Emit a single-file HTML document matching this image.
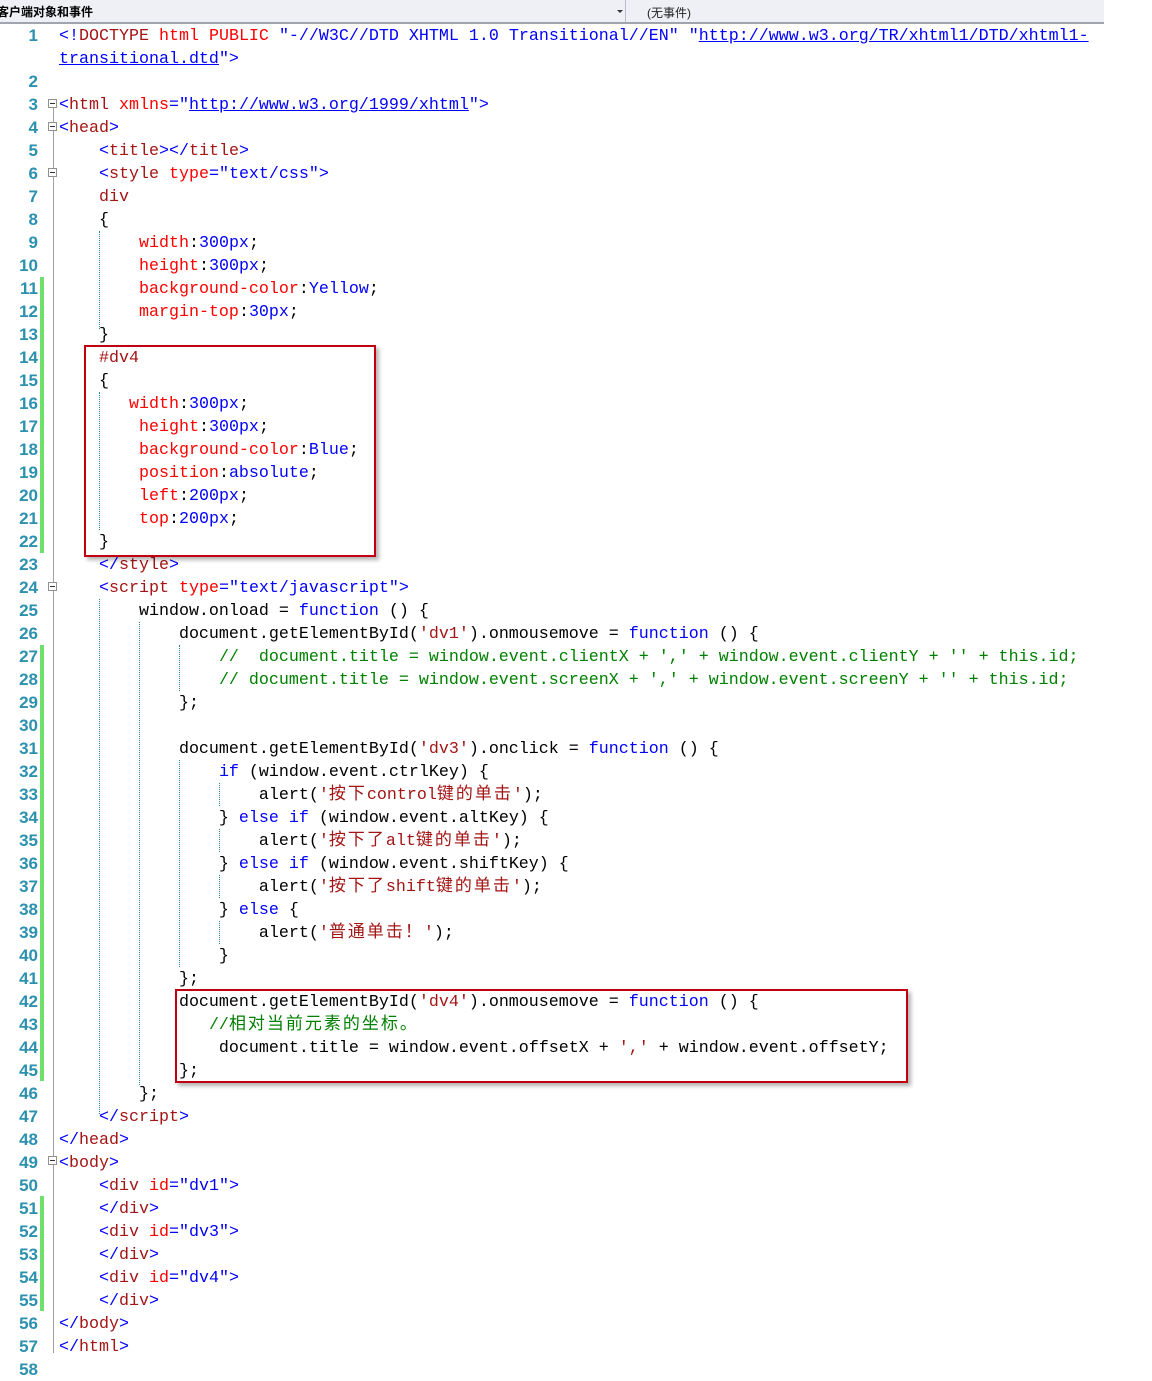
<!DOCTYPE html>
<html><head><meta charset="utf-8"><style>
body{margin:0;width:1152px;height:1378px;background:#fff;position:relative;overflow:hidden;font-family:"Liberation Sans","Noto Sans CJK SC",sans-serif}
#hdr{position:absolute;left:0;top:0;width:1104px;height:22px;background:#eef0f5;border-bottom:2px solid #a0a4ac}
#hdr .l{position:absolute;left:-3px;top:3px;font-size:12px;font-weight:bold;color:#000}
#hdr .d{position:absolute;left:625px;top:0;width:1px;height:22px;background:#b8bcc4}
#hdr .a{position:absolute;left:617px;top:10px;width:0;height:0;border-left:3px solid transparent;border-right:3px solid transparent;border-top:3px solid #333}
#hdr .r{position:absolute;left:647px;top:4px;font-size:12px;color:#222}
.ln{position:absolute;left:0;width:38px;text-align:right;font:bold 17px "Liberation Sans",sans-serif;color:#2b91af;height:23px;line-height:23px}
.cd{position:absolute;left:59px;margin:0;white-space:pre;font:16.67px "Liberation Mono","Noto Sans CJK SC",monospace;height:23px;line-height:23px;color:#000;margin-top:1px}
.c{font-family:"Noto Sans CJK SC",sans-serif;font-size:17px;letter-spacing:2px;line-height:0}
.b{color:#0000ff}.m{color:#a31515}.r{color:#ff0000}.g{color:#008000}.u{color:#0000ff;text-decoration:underline}
.bar{position:absolute;left:40px;width:4px;background:#6ee06e}
.fold{position:absolute;left:53px;width:1px;background:#a0a0a0}
.fb{position:absolute;left:48px;width:7px;height:7px;border:1px solid #909090;background:#fff}
.fb:after{content:"";position:absolute;left:1px;top:3px;width:5px;height:1px;background:#333}
.gd{position:absolute;width:0;border-left:1px dotted #2a8a8a}
.box{position:absolute;border:2px solid #c00010;box-shadow:3px 3px 4px rgba(0,0,0,.3)}
</style></head><body>
<div id="hdr"><span class="l">客户端对象和事件</span><span class="a"></span><span class="d"></span><span class="r">(无事件)</span></div>

<div class="bar" style="top:277px;height:276px"></div>
<div class="bar" style="top:645px;height:436px"></div>
<div class="bar" style="top:1196px;height:115px"></div>

<div class="fold" style="top:103px;height:1250px"></div>
<div class="fb" style="top:99px"></div>
<div class="fb" style="top:122px"></div>
<div class="fb" style="top:168px"></div>
<div class="fb" style="top:582px"></div>
<div class="fb" style="top:1156px"></div>

<div class="gd" style="left:99px;top:231px;height:98px"></div>
<div class="gd" style="left:99px;top:392px;height:138px"></div>
<div class="gd" style="left:99px;top:599px;height:515px"></div>
<div class="gd" style="left:139px;top:622px;height:463px"></div>
<div class="gd" style="left:179px;top:645px;height:46px"></div>
<div class="gd" style="left:179px;top:760px;height:207px"></div>
<div class="gd" style="left:219px;top:783px;height:23px"></div>
<div class="gd" style="left:219px;top:829px;height:23px"></div>
<div class="gd" style="left:219px;top:875px;height:23px"></div>
<div class="gd" style="left:219px;top:921px;height:23px"></div>

<div class="ln" style="top:24px">1</div><div class="cd" style="top:24px"><span class="b">&lt;!</span><span class="m">DOCTYPE</span> <span class="r">html</span> <span class="r">PUBLIC</span> <span class="b">"-//W3C//DTD XHTML 1.0 Transitional//EN"</span> <span class="b">"</span><span class="u">http://www.w3.org/TR/xhtml1/DTD/xhtml1-</span></div>
<div class="cd" style="top:47px"><span class="u">transitional.dtd</span><span class="b">"&gt;</span></div>
<div class="ln" style="top:70px">2</div>
<div class="ln" style="top:93px">3</div><div class="cd" style="top:93px"><span class="b">&lt;</span><span class="m">html</span> <span class="r">xmlns</span><span class="b">="</span><span class="u">http://www.w3.org/1999/xhtml</span><span class="b">"&gt;</span></div>
<div class="ln" style="top:116px">4</div><div class="cd" style="top:116px"><span class="b">&lt;</span><span class="m">head</span><span class="b">&gt;</span></div>
<div class="ln" style="top:139px">5</div><div class="cd" style="top:139px">    <span class="b">&lt;</span><span class="m">title</span><span class="b">&gt;&lt;/</span><span class="m">title</span><span class="b">&gt;</span></div>
<div class="ln" style="top:162px">6</div><div class="cd" style="top:162px">    <span class="b">&lt;</span><span class="m">style</span> <span class="r">type</span><span class="b">="text/css"&gt;</span></div>
<div class="ln" style="top:185px">7</div><div class="cd" style="top:185px">    <span class="m">div</span></div>
<div class="ln" style="top:208px">8</div><div class="cd" style="top:208px">    {</div>
<div class="ln" style="top:231px">9</div><div class="cd" style="top:231px">        <span class="r">width</span>:<span class="b">300px</span>;</div>
<div class="ln" style="top:254px">10</div><div class="cd" style="top:254px">        <span class="r">height</span>:<span class="b">300px</span>;</div>
<div class="ln" style="top:277px">11</div><div class="cd" style="top:277px">        <span class="r">background-color</span>:<span class="b">Yellow</span>;</div>
<div class="ln" style="top:300px">12</div><div class="cd" style="top:300px">        <span class="r">margin-top</span>:<span class="b">30px</span>;</div>
<div class="ln" style="top:323px">13</div><div class="cd" style="top:323px">    }</div>
<div class="ln" style="top:346px">14</div><div class="cd" style="top:346px">    <span class="m">#dv4</span></div>
<div class="ln" style="top:369px">15</div><div class="cd" style="top:369px">    {</div>
<div class="ln" style="top:392px">16</div><div class="cd" style="top:392px">       <span class="r">width</span>:<span class="b">300px</span>;</div>
<div class="ln" style="top:415px">17</div><div class="cd" style="top:415px">        <span class="r">height</span>:<span class="b">300px</span>;</div>
<div class="ln" style="top:438px">18</div><div class="cd" style="top:438px">        <span class="r">background-color</span>:<span class="b">Blue</span>;</div>
<div class="ln" style="top:461px">19</div><div class="cd" style="top:461px">        <span class="r">position</span>:<span class="b">absolute</span>;</div>
<div class="ln" style="top:484px">20</div><div class="cd" style="top:484px">        <span class="r">left</span>:<span class="b">200px</span>;</div>
<div class="ln" style="top:507px">21</div><div class="cd" style="top:507px">        <span class="r">top</span>:<span class="b">200px</span>;</div>
<div class="ln" style="top:530px">22</div><div class="cd" style="top:530px">    }</div>
<div class="ln" style="top:553px">23</div><div class="cd" style="top:553px">    <span class="b">&lt;/</span><span class="m">style</span><span class="b">&gt;</span></div>
<div class="ln" style="top:576px">24</div><div class="cd" style="top:576px">    <span class="b">&lt;</span><span class="m">script</span> <span class="r">type</span><span class="b">="text/javascript"&gt;</span></div>
<div class="ln" style="top:599px">25</div><div class="cd" style="top:599px">        window.onload = <span class="b">function</span> () {</div>
<div class="ln" style="top:622px">26</div><div class="cd" style="top:622px">            document.getElementById(<span class="m">'dv1'</span>).onmousemove = <span class="b">function</span> () {</div>
<div class="ln" style="top:645px">27</div><div class="cd" style="top:645px">                <span class="g">//  document.title = window.event.clientX + ',' + window.event.clientY + '' + this.id;</span></div>
<div class="ln" style="top:668px">28</div><div class="cd" style="top:668px">                <span class="g">// document.title = window.event.screenX + ',' + window.event.screenY + '' + this.id;</span></div>
<div class="ln" style="top:691px">29</div><div class="cd" style="top:691px">            };</div>
<div class="ln" style="top:714px">30</div>
<div class="ln" style="top:737px">31</div><div class="cd" style="top:737px">            document.getElementById(<span class="m">'dv3'</span>).onclick = <span class="b">function</span> () {</div>
<div class="ln" style="top:760px">32</div><div class="cd" style="top:760px">                <span class="b">if</span> (window.event.ctrlKey) {</div>
<div class="ln" style="top:783px">33</div><div class="cd" style="top:783px">                    alert(<span class="m">'<span class="c">按下</span>control<span class="c">键的单击</span>'</span>);</div>
<div class="ln" style="top:806px">34</div><div class="cd" style="top:806px">                } <span class="b">else</span> <span class="b">if</span> (window.event.altKey) {</div>
<div class="ln" style="top:829px">35</div><div class="cd" style="top:829px">                    alert(<span class="m">'<span class="c">按下了</span>alt<span class="c">键的单击</span>'</span>);</div>
<div class="ln" style="top:852px">36</div><div class="cd" style="top:852px">                } <span class="b">else</span> <span class="b">if</span> (window.event.shiftKey) {</div>
<div class="ln" style="top:875px">37</div><div class="cd" style="top:875px">                    alert(<span class="m">'<span class="c">按下了</span>shift<span class="c">键的单击</span>'</span>);</div>
<div class="ln" style="top:898px">38</div><div class="cd" style="top:898px">                } <span class="b">else</span> {</div>
<div class="ln" style="top:921px">39</div><div class="cd" style="top:921px">                    alert(<span class="m">'<span class="c">普通单击！</span>'</span>);</div>
<div class="ln" style="top:944px">40</div><div class="cd" style="top:944px">                }</div>
<div class="ln" style="top:967px">41</div><div class="cd" style="top:967px">            };</div>
<div class="ln" style="top:990px">42</div><div class="cd" style="top:990px">            document.getElementById(<span class="m">'dv4'</span>).onmousemove = <span class="b">function</span> () {</div>
<div class="ln" style="top:1013px">43</div><div class="cd" style="top:1013px">               <span class="g">//<span class="c">相对当前元素的坐标。</span></span></div>
<div class="ln" style="top:1036px">44</div><div class="cd" style="top:1036px">                document.title = window.event.offsetX + <span class="m">','</span> + window.event.offsetY;</div>
<div class="ln" style="top:1059px">45</div><div class="cd" style="top:1059px">            };</div>
<div class="ln" style="top:1082px">46</div><div class="cd" style="top:1082px">        };</div>
<div class="ln" style="top:1105px">47</div><div class="cd" style="top:1105px">    <span class="b">&lt;/</span><span class="m">script</span><span class="b">&gt;</span></div>
<div class="ln" style="top:1128px">48</div><div class="cd" style="top:1128px"><span class="b">&lt;/</span><span class="m">head</span><span class="b">&gt;</span></div>
<div class="ln" style="top:1151px">49</div><div class="cd" style="top:1151px"><span class="b">&lt;</span><span class="m">body</span><span class="b">&gt;</span></div>
<div class="ln" style="top:1174px">50</div><div class="cd" style="top:1174px">    <span class="b">&lt;</span><span class="m">div</span> <span class="r">id</span><span class="b">="dv1"&gt;</span></div>
<div class="ln" style="top:1197px">51</div><div class="cd" style="top:1197px">    <span class="b">&lt;/</span><span class="m">div</span><span class="b">&gt;</span></div>
<div class="ln" style="top:1220px">52</div><div class="cd" style="top:1220px">    <span class="b">&lt;</span><span class="m">div</span> <span class="r">id</span><span class="b">="dv3"&gt;</span></div>
<div class="ln" style="top:1243px">53</div><div class="cd" style="top:1243px">    <span class="b">&lt;/</span><span class="m">div</span><span class="b">&gt;</span></div>
<div class="ln" style="top:1266px">54</div><div class="cd" style="top:1266px">    <span class="b">&lt;</span><span class="m">div</span> <span class="r">id</span><span class="b">="dv4"&gt;</span></div>
<div class="ln" style="top:1289px">55</div><div class="cd" style="top:1289px">    <span class="b">&lt;/</span><span class="m">div</span><span class="b">&gt;</span></div>
<div class="ln" style="top:1312px">56</div><div class="cd" style="top:1312px"><span class="b">&lt;/</span><span class="m">body</span><span class="b">&gt;</span></div>
<div class="ln" style="top:1335px">57</div><div class="cd" style="top:1335px"><span class="b">&lt;/</span><span class="m">html</span><span class="b">&gt;</span></div>
<div class="ln" style="top:1358px">58</div>

<div class="box" style="left:84px;top:345px;width:288px;height:208px"></div>
<div class="box" style="left:175px;top:989px;width:729px;height:90px"></div>
</body></html>
